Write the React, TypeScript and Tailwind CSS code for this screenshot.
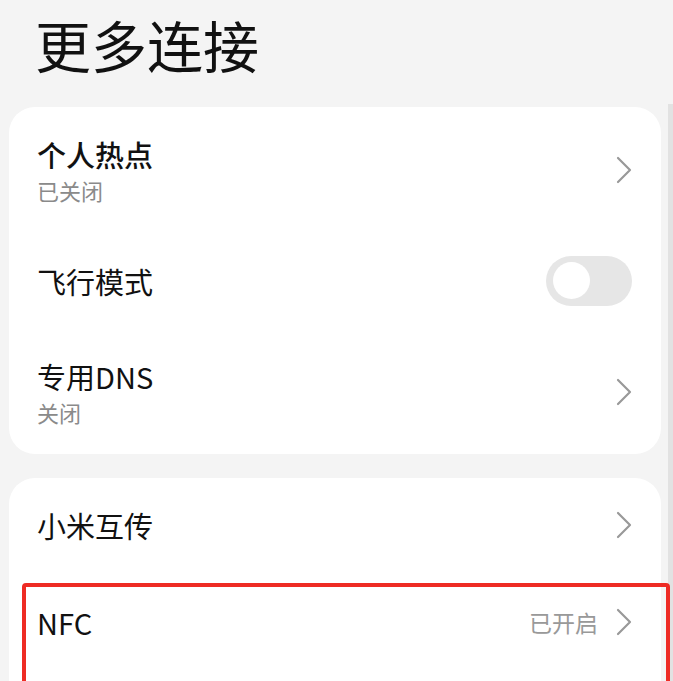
const font = { fontFamily: '"Noto Sans CJK SC", "Noto Sans", sans-serif' };

function Chevron() {
  return (
    <svg width="16" height="28" viewBox="0 0 16 28" fill="none" className="shrink-0">
      <path d="M2 2 L14 14 L2 26" stroke="#999999" strokeWidth="2.2" strokeLinecap="round" strokeLinejoin="round" />
    </svg>
  );
}

function Toggle() {
  return (
    <div className="w-[86px] h-[50px] rounded-full bg-[#e6e6e6] flex items-center pl-[7px]">
      <div className="w-[37px] h-[37px] rounded-full bg-white" />
    </div>
  );
}

interface RowProps {
  title: string;
  sub?: string;
  value?: string;
  toggle?: boolean;
  bold?: boolean;
  height: string;
}

function Row({ title, sub, value, toggle, bold, height }: RowProps) {
  return (
    <div className={`flex items-center justify-between pl-[28px] pr-[29px] ${height}`}>
      <div className="flex flex-col">
        <span className={`text-[29px] leading-[40px] text-[#111] ${bold ? 'font-medium' : 'font-normal'}`}>{title}</span>
        {sub && <span className="text-[22px] leading-[32px] text-[#8a8a8a]">{sub}</span>}
      </div>
      <div className="flex items-center gap-[18px]">
        {value && <span className="text-[23px] text-[#999999]">{value}</span>}
        {toggle ? <Toggle /> : <Chevron />}
      </div>
    </div>
  );
}

export default function App() {
  return (
    <div className="relative w-[673px] h-[681px] overflow-hidden bg-[#f4f4f4]" style={font}>
      <div className="absolute right-0 top-[104px] w-[5px] h-[600px] bg-[#e2e2e2]" />
      <h1 className="pl-[35px] pt-[12px] text-[56px] leading-[64px] font-normal text-[#111]">更多连接</h1>
      <div className="mx-[9px] w-[652px] mt-[31px] flex flex-col gap-[24px]">
        <div className="bg-white rounded-[26px] py-[7px]">
          <Row title="个人热点" sub="已关闭" bold height="h-[111px]" />
          <Row title="飞行模式" toggle height="h-[111px]" />
          <Row title="专用DNS" sub="关闭" height="h-[111px]" />
        </div>
        <div className="bg-white rounded-[26px] h-[260px]">
          <Row title="小米互传" height="h-[94px]" />
          <Row title="NFC" value="已开启" height="h-[100px]" />
        </div>
      </div>
      <div className="absolute left-[22px] top-[583px] w-[648px] h-[140px] border-[4px] border-[#ee2b24] rounded-[4px]" />
    </div>
  );
}
